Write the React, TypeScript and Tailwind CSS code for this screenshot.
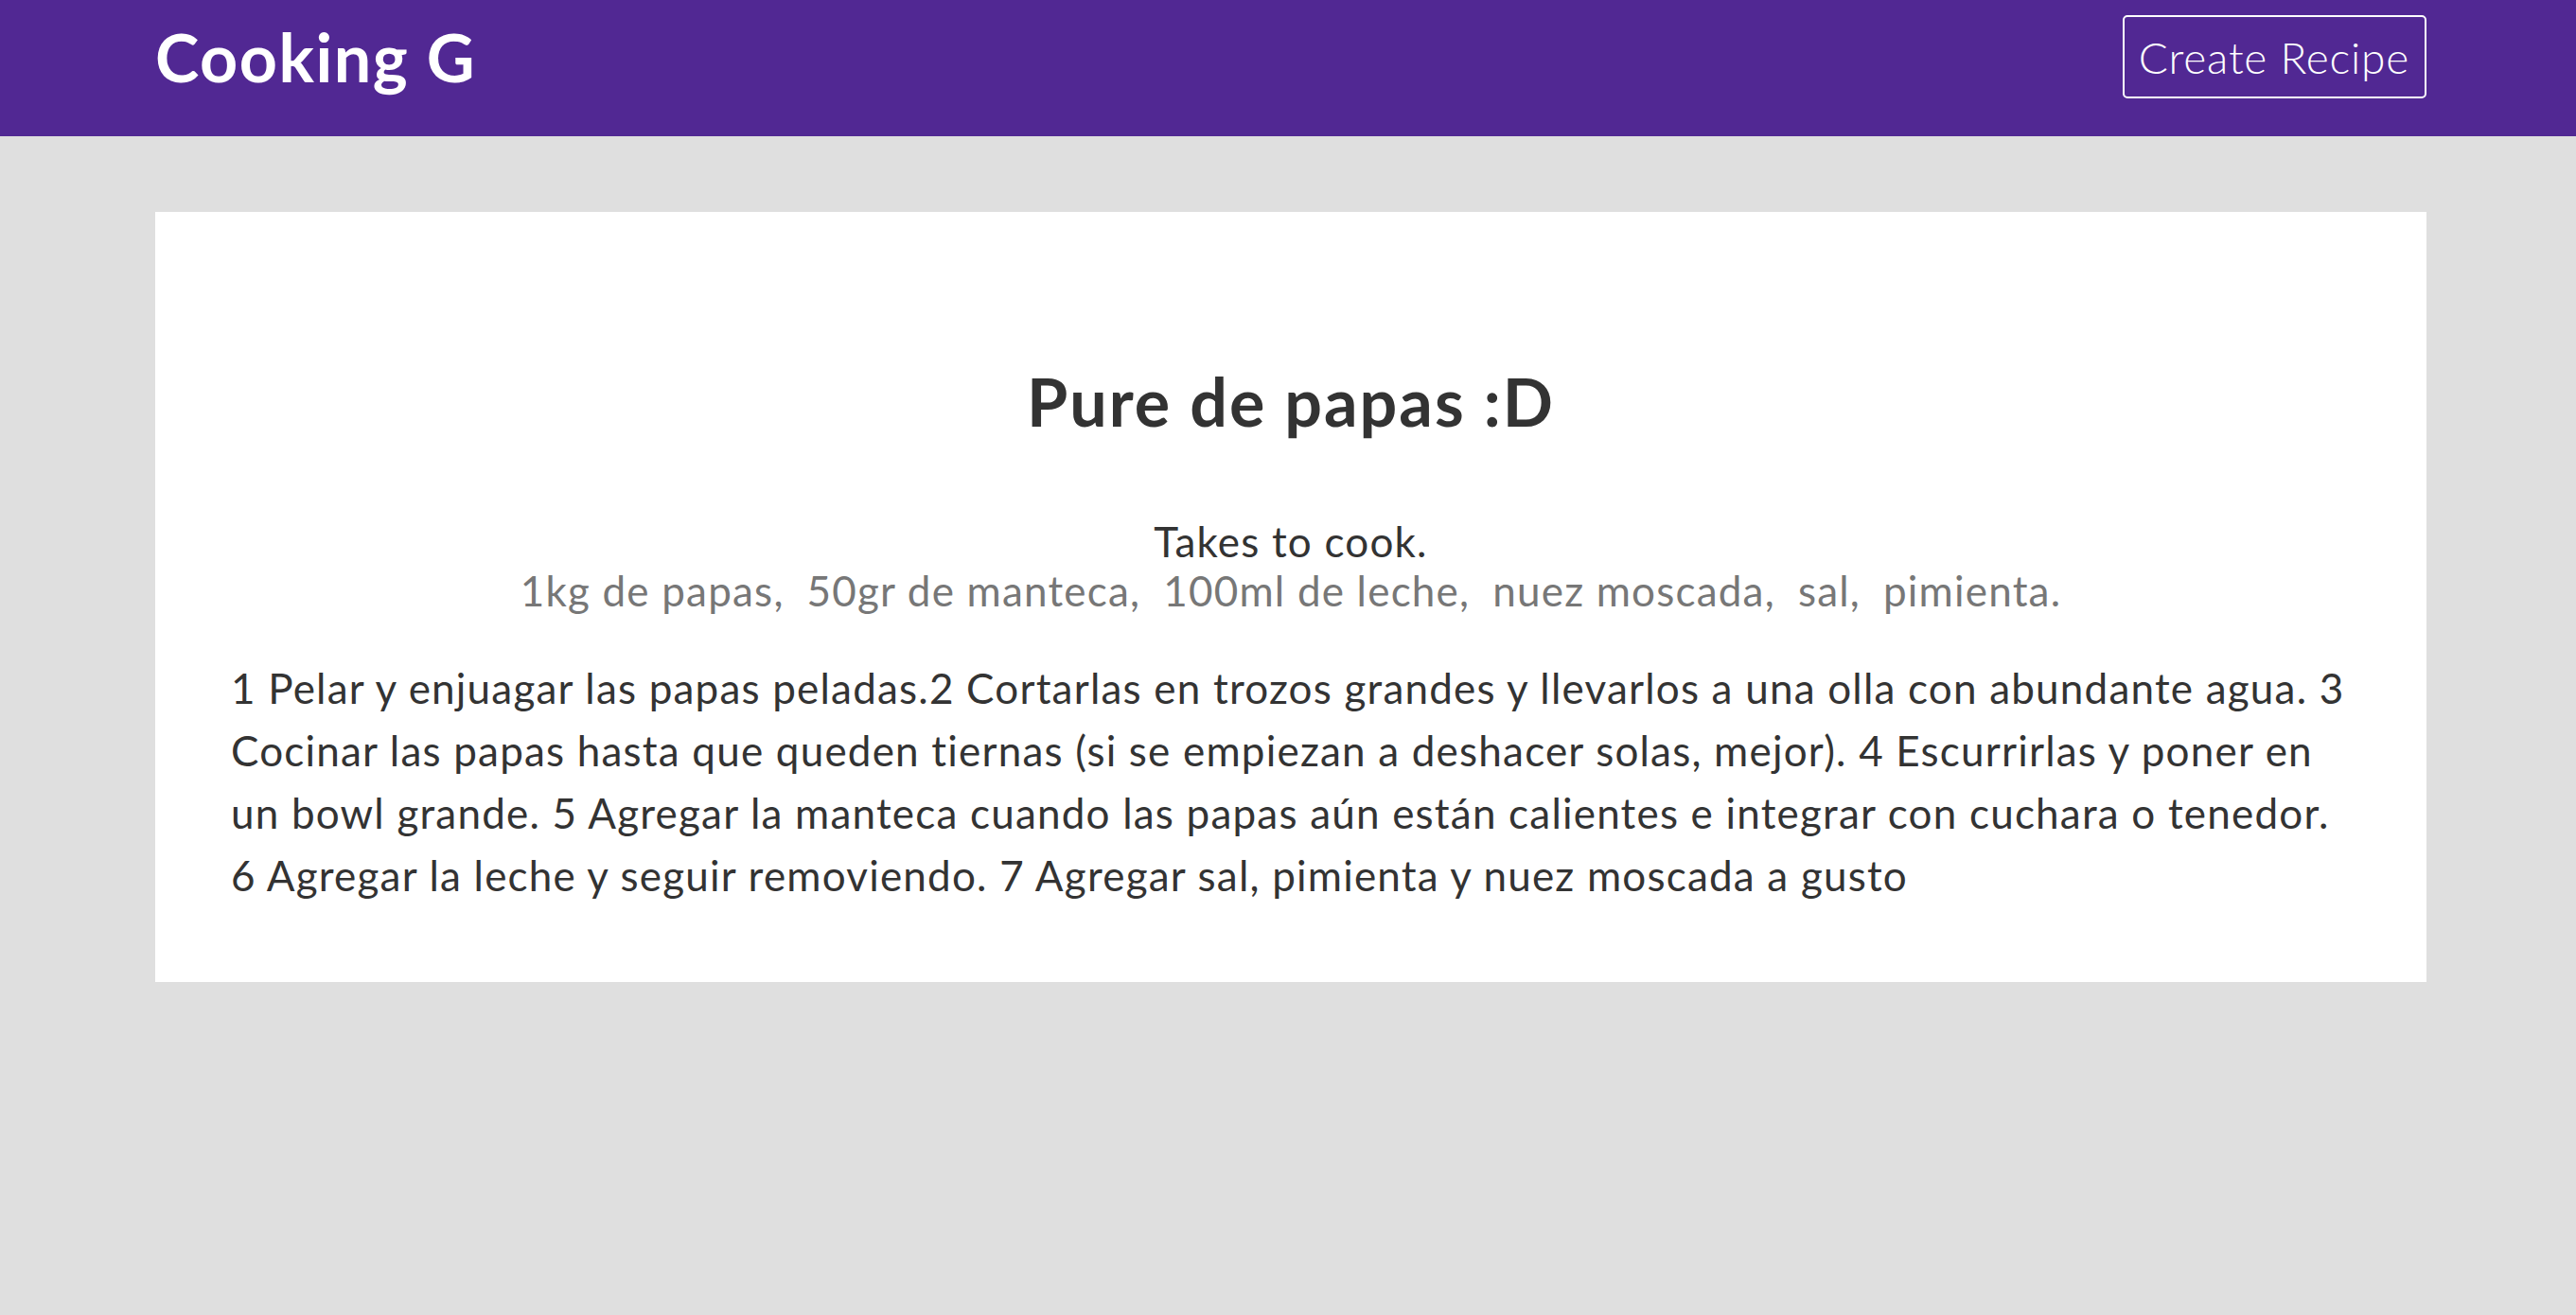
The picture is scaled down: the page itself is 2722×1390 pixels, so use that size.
import React from "react";

const ingredients = ["1kg de papas", "50gr de manteca", "100ml de leche", "nuez moscada", "sal", "pimienta"];

export default function App() {
  return (
    <div className="min-h-[1390px] bg-[#dfdfdf] font-['Lato','Liberation_Sans',sans-serif]">
      <header className="h-[144px] bg-[#512893]">
        <div className="ml-[164px] flex h-[120px] w-[2400px] items-center justify-between">
          <h1 className="text-[70px] font-bold leading-none tracking-[1.5px] text-white">Cooking G</h1>
          <button className="h-[88px] rounded-[5px] border-2 border-white pl-[15px] pr-[16px] text-[46px] font-light tracking-[0.8px] text-white">
            Create Recipe
          </button>
        </div>
      </header>
      <main className="ml-[164px] mt-[80px] w-[2400px] bg-white px-[80px] pb-[80px] pt-[160px] text-[#333333]">
        <h2 className="text-center text-[70px] font-bold leading-[80px] tracking-[2px]">Pure de papas :D</h2>
        <div className="mt-[82px] text-center text-[44px] leading-[52px] tracking-[1.2px]">
          <p>Takes to cook.</p>
          <p className="text-[#777777]">
            {ingredients.map((ing, i) => (
              <span key={i} className={i > 0 ? "ml-[24px]" : ""}>
                {ing}
                {i < ingredients.length - 1 ? "," : "."}
              </span>
            ))}
          </p>
        </div>
        <p className="mt-[44px] text-[44px] leading-[66px] tracking-[1.2px]">
          1 Pelar y enjuagar las papas peladas.2 Cortarlas en trozos grandes y llevarlos a una olla con abundante agua. 3 Cocinar las papas hasta que queden tiernas (si se empiezan a deshacer solas, mejor). 4 Escurrirlas y poner en un bowl grande. 5 Agregar la manteca cuando las papas aún están calientes e integrar con cuchara o tenedor. 6 Agregar la leche y seguir removiendo. 7 Agregar sal, pimienta y nuez moscada a gusto
        </p>
      </main>
    </div>
  );
}
